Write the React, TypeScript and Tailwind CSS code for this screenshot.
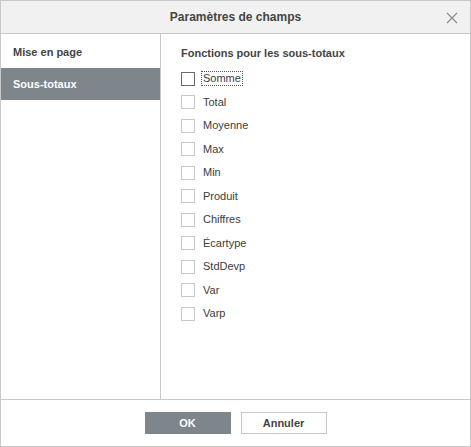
import { useState } from "react";

const functions = [
  "Somme",
  "Total",
  "Moyenne",
  "Max",
  "Min",
  "Produit",
  "Chiffres",
  "Écartype",
  "StdDevp",
  "Var",
  "Varp",
];

export default function App() {
  const [checked, setChecked] = useState<Record<string, boolean>>({});
  const [tab, setTab] = useState(1);

  return (
    <div className="w-[471px] h-[447px] border border-[#c8c8c8] bg-white flex flex-col text-[#444] font-['Liberation_Sans',Arial,sans-serif]">
      <div className="h-[33px] shrink-0 border-b border-[#c8c8c8] bg-[#f1f1f1] relative flex items-center justify-center">
        <span className="text-[12px] font-bold leading-none">Paramètres de champs</span>
        <button className="absolute right-[12px] top-[11px] w-[12px] h-[12px] flex items-center justify-center">
          <svg width="12" height="12" viewBox="0 0 12 12">
            <path d="M1 1 L11 11 M11 1 L1 11" stroke="#8a8a8a" strokeWidth="1.1" fill="none" />
          </svg>
        </button>
      </div>

      <div className="flex-1 flex min-h-0">
        <div className="w-[160px] shrink-0 border-r border-[#c8c8c8] pt-[2px]">
          {["Mise en page", "Sous-totaux"].map((t, i) => (
            <div
              key={t}
              onClick={() => setTab(i)}
              className={
                "h-[32px] flex items-center pl-[12px] text-[11px] font-bold cursor-pointer " +
                (tab === i ? "bg-[#7e858b] text-white" : "text-[#444]")
              }
            >
              {t}
            </div>
          ))}
        </div>

        <div className="flex-1 pl-[20px] pt-[11px]">
          <div className="text-[11px] font-bold leading-[16px]">Fonctions pour les sous-totaux</div>
          <div className="mt-[6px] flex flex-col">
            {functions.map((f, i) => (
              <label key={f} className="h-[23.5px] flex items-center cursor-pointer">
                <span
                  className={
                    "w-[14px] h-[14px] border bg-white shrink-0 " +
                    (i === 0 ? "border-[#6a6a6a]" : "border-[#c8c8c8]")
                  }
                  onClick={() => setChecked({ ...checked, [f]: !checked[f] })}
                />
                <span
                  className={
                    "ml-[7px] text-[11px] leading-[13px] px-[1px] text-[#3c3c3c] " +
                    (i === 0 ? "outline outline-1 outline-dotted outline-[#555]" : "")
                  }
                >
                  {f}
                </span>
              </label>
            ))}
          </div>
        </div>
      </div>

      <div className="h-[47px] shrink-0 border-t border-[#c8c8c8] flex items-center justify-center gap-[10px]">
        <button className="w-[86px] h-[22px] bg-[#7e858b] text-white text-[11px] font-bold">OK</button>
        <button className="w-[86px] h-[22px] border border-[#c8c8c8] bg-white text-[#444] text-[11px] font-bold">
          Annuler
        </button>
      </div>
    </div>
  );
}
